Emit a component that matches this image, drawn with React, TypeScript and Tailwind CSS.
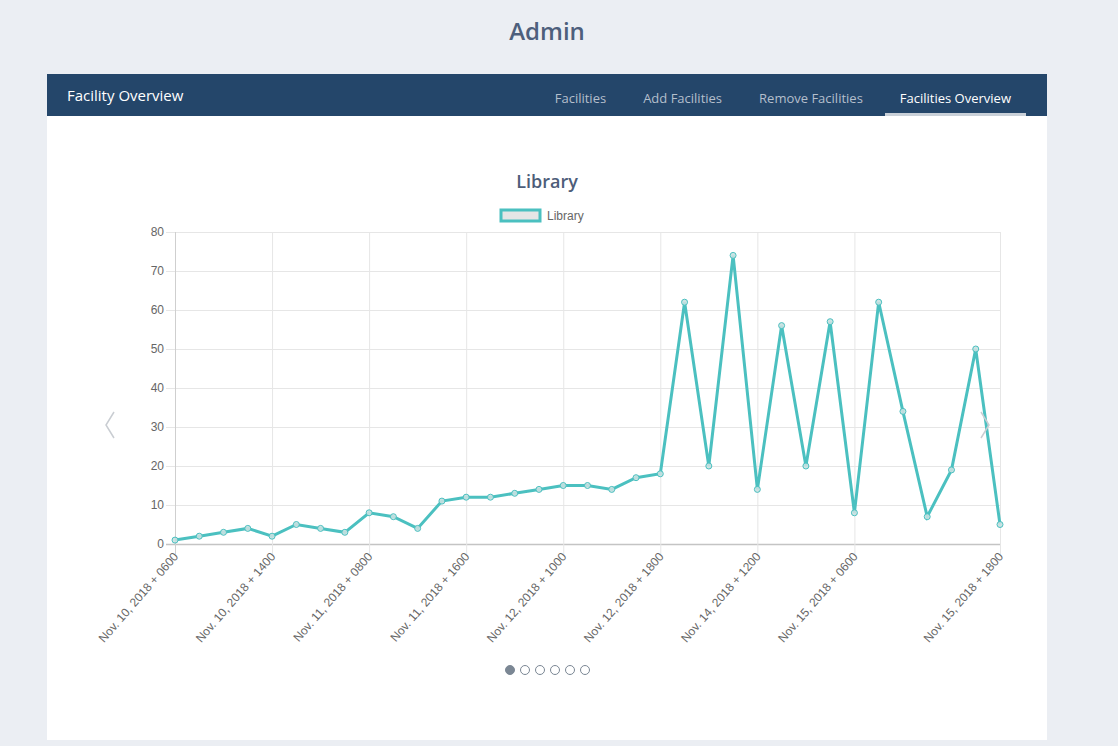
import React from "react";

const data = [
  1, 2, 3, 4, 2, 5, 4, 3, 8, 7, 4, 11, 12, 12, 13, 14, 15, 15, 14, 17, 18, 62,
  20, 74, 14, 56, 20, 57, 8, 62, 34, 7, 19, 50, 5,
];

const labels = [
  "Nov. 10, 2018 + 0600",
  "Nov. 10, 2018 + 1400",
  "Nov. 11, 2018 + 0800",
  "Nov. 11, 2018 + 1600",
  "Nov. 12, 2018 + 1000",
  "Nov. 12, 2018 + 1800",
  "Nov. 14, 2018 + 1200",
  "Nov. 15, 2018 + 0600",
];

// plot area in page coordinates
const X0 = 175;
const X1 = 1000;
const Y0 = 544;
const Y1 = 232;
const step = (X1 - X0) / (data.length - 1);
const px = (i: number) => X0 + i * step;
const py = (v: number) => Y0 - (v / 80) * (Y0 - Y1);

const tabs = ["Facilities", "Add Facilities", "Remove Facilities", "Facilities Overview"];

const Chart = () => {
  const ticks = [0, 10, 20, 30, 40, 50, 60, 70, 80];
  const xTicks = [...labels.map((l, k) => ({ l, x: px(k * 4) })), { l: "Nov. 15, 2018 + 1800", x: X1 }];
  const line = data.map((v, i) => `${px(i).toFixed(1)},${py(v).toFixed(1)}`).join(" ");

  return (
    <svg
      width={1000}
      height={540}
      viewBox="47 116 1000 540"
      className="block"
      style={{ fontFamily: '"Liberation Sans", Arial, sans-serif' }}
    >
      <text
        x={547}
        y={188}
        textAnchor="middle"
        fontSize={18}
        fontWeight={600}
        fill="#4d5d79"
        style={{ fontFamily: '"Open Sans", sans-serif' }}
      >
        Library
      </text>

      <rect x={501} y={210} width={39} height={11} fill="#e6e6e6" stroke="#4bc0c0" strokeWidth={3} />
      <text x={547} y={219.5} fontSize={12} fill="#666">
        Library
      </text>

      {ticks.map((t) => (
        <g key={t}>
          <line
            x1={166}
            x2={X1}
            y1={py(t) + 0.5}
            y2={py(t) + 0.5}
            stroke={t === 0 ? "#c4c4c4" : "#e6e6e6"}
            strokeWidth={t === 0 ? 1.5 : 1}
          />
          <text x={164} y={py(t) + 4} textAnchor="end" fontSize={12} fill="#666">
            {t}
          </text>
        </g>
      ))}

      {xTicks.map(({ l, x }, k) => (
        <g key={k}>
          <line
            x1={x + 0.5}
            x2={x + 0.5}
            y1={Y1}
            y2={Y0 + 10}
            stroke={k === 0 ? "#cfcfcf" : "#e6e6e6"}
          />
          <text
            x={x + 4}
            y={557}
            textAnchor="end"
            fontSize={12}
            fill="#666"
            transform={`rotate(-49 ${x + 4} 557)`}
          >
            {l}
          </text>
        </g>
      ))}

      <polyline points={line} fill="none" stroke="#4bc0c0" strokeWidth={3} strokeLinejoin="miter" />
      {data.map((v, i) => (
        <circle
          key={i}
          cx={px(i)}
          cy={py(v)}
          r={3}
          fill="rgba(200,225,225,0.9)"
          stroke="#4bc0c0"
          strokeWidth={1}
        />
      ))}

      <polyline points="114,412 106,425 114,438" fill="none" stroke="#c9cdd2" strokeWidth={1.5} />
      <polyline points="981,412 989,425 981,438" fill="none" stroke="#c9cdd2" strokeWidth={1.5} />
    </svg>
  );
};

export default function App() {
  return (
    <div
      className="min-h-[746px] bg-[#ebeef3]"
      style={{ fontFamily: '"Open Sans", "Noto Sans", sans-serif' }}
    >
      <div className="h-[74px] w-[1094px]">
        <h1 className="pt-[16px] text-center text-[24px] font-semibold leading-[30px] text-[#4d5f7c]">
          Admin
        </h1>
      </div>

      <div className="ml-[47px] w-[1000px] bg-white">
        <div className="flex h-[42px] items-stretch justify-between bg-[#24466a] pr-[21px]">
          <div className="flex items-center pl-[20px] text-[15px] text-white">Facility Overview</div>
          <div className="flex items-stretch gap-[7px]">
            {tabs.map((t, i) => (
              <div
                key={t}
                className={
                  i === 3
                    ? "flex items-center border-b-[3px] border-[#c9d0d8] px-[15px] pt-[10px] text-[13px] text-white"
                    : "flex items-center border-b-[3px] border-transparent px-[15px] pt-[10px] text-[13px] text-[#b4bfcc]"
                }
              >
                {t}
              </div>
            ))}
          </div>
        </div>

        <Chart />

        <div className="flex justify-center gap-[5px] pb-[65px] pt-[9px]">
          {[0, 1, 2, 3, 4, 5].map((i) => (
            <span
              key={i}
              className={
                i === 0
                  ? "h-[10px] w-[10px] rounded-full border border-[#7b8794] bg-[#7b8794]"
                  : "h-[10px] w-[10px] rounded-full border border-[#7b8794] bg-white"
              }
            />
          ))}
        </div>
      </div>
    </div>
  );
}
